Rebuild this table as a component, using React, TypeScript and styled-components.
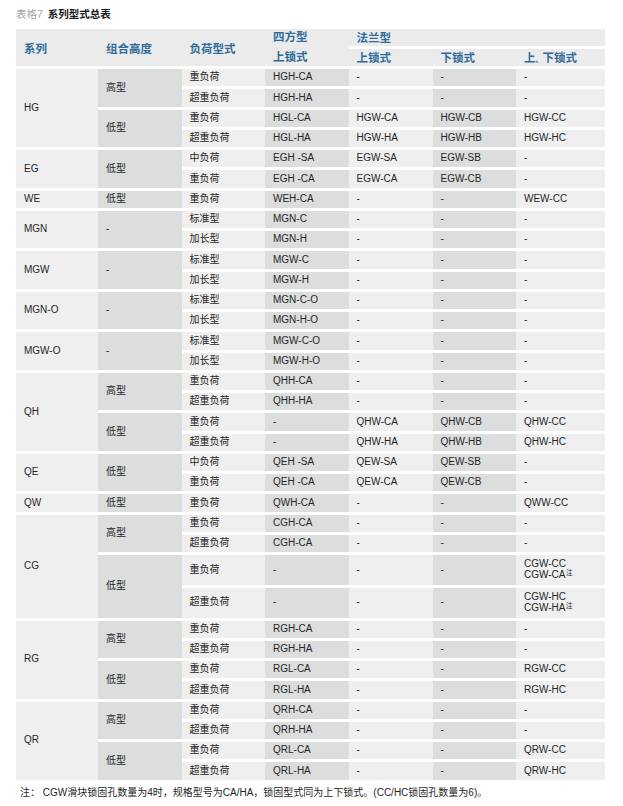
import React from 'react';
import styled, { createGlobalStyle } from 'styled-components';

const GlobalStyle = createGlobalStyle`
  html, body { margin: 0; padding: 0; background: #ffffff; }
  body {
    font-family: "Liberation Sans", "Noto Sans CJK SC", sans-serif;
    color: #262626;
  }
`;

const Page = styled.div`
  width: 623px;
  box-sizing: border-box;
  padding: 7px 18px 0 16px;
`;

const Title = styled.div`
  display: flex;
  gap: 5px;
  height: 14px;
  line-height: 14px;
  font-size: 10.5px;
  margin-bottom: 8px;
`;

const TitleTag = styled.span`
  color: #a3a3a3;
`;

const TitleText = styled.span`
  color: #1a1a1a;
  font-weight: 700;
`;

const Table = styled.table`
  width: 589px;
  table-layout: fixed;
  border-collapse: separate;
  border-spacing: 0;
`;

const HeadCell = styled.th<{ $h: number; $gap?: number }>`
  box-sizing: border-box;
  height: ${p => p.$h}px;
  padding: 0 8px;
  background: #ebebeb;
  color: #2f6b9a;
  font-size: 11.5px;
  font-weight: 700;
  text-align: left;
  vertical-align: middle;
  white-space: nowrap;
  border-bottom: ${p => p.$gap ?? 3}px solid #ffffff;
`;

const StackedHead = styled.div`
  display: flex;
  flex-direction: column;
  gap: 3.5px;
`;

const HeadLine = styled.span<{ $h: number }>`
  display: block;
  height: ${p => p.$h}px;
  line-height: ${p => p.$h}px;
`;

const Tight = styled.span`
  font-size: 7px;
`;

const Cell = styled.td<{ $shade: 'light' | 'dark'; $tall?: boolean }>`
  box-sizing: border-box;
  height: ${p => (p.$tall ? 32.8 : 20.25)}px;
  padding: 0 8px;
  background: ${p => (p.$shade === 'dark' ? '#dcdddd' : '#efefef')};
  border-bottom: 3px solid #ffffff;
  font-size: 10px;
  line-height: 10.5px;
  vertical-align: middle;
  white-space: nowrap;
`;

const Note = styled.sup`
  font-size: 6.5px;
  line-height: 0;
  vertical-align: 3px;
  margin-left: 0.5px;
`;

const Footnote = styled.p`
  margin: 3px 0 0 0;
  padding-left: 4px;
  font-size: 10px;
  line-height: 14px;
  color: #262626;
  white-space: nowrap;
`;

type Row = { load: string; cols: React.ReactNode[]; tall?: boolean };
type Height = { name: string; rows: Row[] };
type Group = { series: string; heights: Height[] };

const d = '-';
const r = (load: string, a: React.ReactNode, b: React.ReactNode, c: React.ReactNode, e: React.ReactNode, tall?: boolean): Row => ({
  load,
  cols: [a, b, c, e],
  tall,
});

const groups: Group[] = [
  {
    series: 'HG',
    heights: [
      { name: '高型', rows: [r('重负荷', 'HGH-CA', d, d, d), r('超重负荷', 'HGH-HA', d, d, d)] },
      { name: '低型', rows: [r('重负荷', 'HGL-CA', 'HGW-CA', 'HGW-CB', 'HGW-CC'), r('超重负荷', 'HGL-HA', 'HGW-HA', 'HGW-HB', 'HGW-HC')] },
    ],
  },
  {
    series: 'EG',
    heights: [
      { name: '低型', rows: [r('中负荷', 'EGH -SA', 'EGW-SA', 'EGW-SB', d), r('重负荷', 'EGH -CA', 'EGW-CA', 'EGW-CB', d)] },
    ],
  },
  {
    series: 'WE',
    heights: [{ name: '低型', rows: [r('重负荷', 'WEH-CA', d, d, 'WEW-CC')] }],
  },
  {
    series: 'MGN',
    heights: [{ name: '-', rows: [r('标准型', 'MGN-C', d, d, d), r('加长型', 'MGN-H', d, d, d)] }],
  },
  {
    series: 'MGW',
    heights: [{ name: '-', rows: [r('标准型', 'MGW-C', d, d, d), r('加长型', 'MGW-H', d, d, d)] }],
  },
  {
    series: 'MGN-O',
    heights: [{ name: '-', rows: [r('标准型', 'MGN-C-O', d, d, d), r('加长型', 'MGN-H-O', d, d, d)] }],
  },
  {
    series: 'MGW-O',
    heights: [{ name: '-', rows: [r('标准型', 'MGW-C-O', d, d, d), r('加长型', 'MGW-H-O', d, d, d)] }],
  },
  {
    series: 'QH',
    heights: [
      { name: '高型', rows: [r('重负荷', 'QHH-CA', d, d, d), r('超重负荷', 'QHH-HA', d, d, d)] },
      { name: '低型', rows: [r('重负荷', d, 'QHW-CA', 'QHW-CB', 'QHW-CC'), r('超重负荷', d, 'QHW-HA', 'QHW-HB', 'QHW-HC')] },
    ],
  },
  {
    series: 'QE',
    heights: [
      { name: '低型', rows: [r('中负荷', 'QEH -SA', 'QEW-SA', 'QEW-SB', d), r('重负荷', 'QEH -CA', 'QEW-CA', 'QEW-CB', d)] },
    ],
  },
  {
    series: 'QW',
    heights: [{ name: '低型', rows: [r('重负荷', 'QWH-CA', d, d, 'QWW-CC')] }],
  },
  {
    series: 'CG',
    heights: [
      { name: '高型', rows: [r('重负荷', 'CGH-CA', d, d, d), r('超重负荷', 'CGH-CA', d, d, d)] },
      {
        name: '低型',
        rows: [
          r('重负荷', d, d, d, <>CGW-CC<br />CGW-CA<Note>注</Note></>, true),
          r('超重负荷', d, d, d, <>CGW-HC<br />CGW-HA<Note>注</Note></>, true),
        ],
      },
    ],
  },
  {
    series: 'RG',
    heights: [
      { name: '高型', rows: [r('重负荷', 'RGH-CA', d, d, d), r('超重负荷', 'RGH-HA', d, d, d)] },
      { name: '低型', rows: [r('重负荷', 'RGL-CA', d, d, 'RGW-CC'), r('超重负荷', 'RGL-HA', d, d, 'RGW-HC')] },
    ],
  },
  {
    series: 'QR',
    heights: [
      { name: '高型', rows: [r('重负荷', 'QRH-CA', d, d, d), r('超重负荷', 'QRH-HA', d, d, d)] },
      { name: '低型', rows: [r('重负荷', 'QRL-CA', d, d, 'QRW-CC'), r('超重负荷', 'QRL-HA', d, d, 'QRW-HC')] },
    ],
  },
];

const colShades: Array<'light' | 'dark'> = ['dark', 'light', 'dark', 'light'];
const widths = [82, 83.5, 83.5, 83.5, 84, 83.5, 89];

export default function App() {
  return (
    <Page>
      <GlobalStyle />
      <Title>
        <TitleTag>表格7</TitleTag>
        <TitleText>系列型式总表</TitleText>
      </Title>
      <Table>
        <colgroup>
          {widths.map((w, i) => (
            <col key={i} style={{ width: w }} />
          ))}
        </colgroup>
        <thead>
          <tr>
            <HeadCell $h={19.5} rowSpan={2}>系列</HeadCell>
            <HeadCell $h={19.5} rowSpan={2}>组合高度</HeadCell>
            <HeadCell $h={19.5} rowSpan={2}>负荷型式</HeadCell>
            <HeadCell $h={19.5} rowSpan={2}>
              <StackedHead>
                <HeadLine $h={16}>四方型</HeadLine>
                <HeadLine $h={17.5}>上锁式</HeadLine>
              </StackedHead>
            </HeadCell>
            <HeadCell $h={19.5} $gap={3.5} colSpan={3}>法兰型</HeadCell>
          </tr>
          <tr>
            <HeadCell $h={20.5}>上锁式</HeadCell>
            <HeadCell $h={20.5}>下锁式</HeadCell>
            <HeadCell $h={20.5}>
              上<Tight>、</Tight>下锁式
            </HeadCell>
          </tr>
        </thead>
        <tbody>
          {groups.map(g => {
            const total = g.heights.reduce((s, h) => s + h.rows.length, 0);
            return g.heights.map((h, hi) =>
              h.rows.map((row, ri) => (
                <tr key={`${g.series}-${hi}-${ri}`}>
                  {hi === 0 && ri === 0 && (
                    <Cell $shade="light" rowSpan={total}>
                      {g.series}
                    </Cell>
                  )}
                  {ri === 0 && (
                    <Cell $shade="dark" rowSpan={h.rows.length}>
                      {h.name}
                    </Cell>
                  )}
                  <Cell $shade="light" $tall={row.tall}>
                    {row.load}
                  </Cell>
                  {row.cols.map((c, ci) => (
                    <Cell key={ci} $shade={colShades[ci]} $tall={row.tall}>
                      {c}
                    </Cell>
                  ))}
                </tr>
              ))
            );
          })}
        </tbody>
      </Table>
      <Footnote>注：  CGW滑块锁固孔数量为4时，规格型号为CA/HA，锁固型式同为上下锁式。(CC/HC锁固孔数量为6)。</Footnote>
    </Page>
  );
}
